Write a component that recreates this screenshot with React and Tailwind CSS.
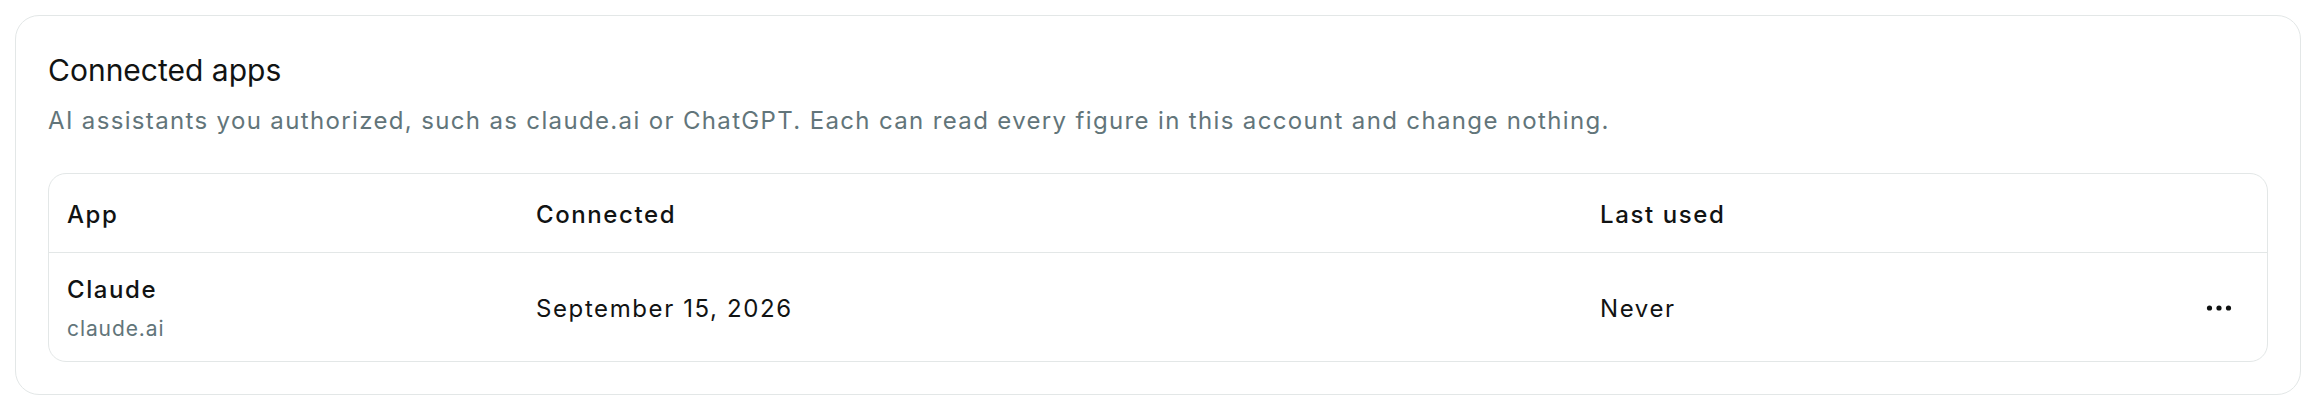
import React from "react";

function Dots() {
  return (
    <svg width="36" height="36" viewBox="0 0 36 36" fill="#0f1111" aria-hidden="true">
      <circle cx="8.5" cy="18" r="2.6" />
      <circle cx="18" cy="18" r="2.6" />
      <circle cx="27.5" cy="18" r="2.6" />
    </svg>
  );
}

export default function App() {
  return (
    <div
      className="p-[15px] bg-white"
      style={{ fontFamily: "Inter, 'Noto Sans', 'Liberation Sans', sans-serif" }}
    >
      <div className="rounded-[24px] border border-[#e3e7e7] bg-white p-[32px]">
        <h2 className="text-[30px] leading-[44px] font-normal text-[#111313]">Connected apps</h2>
        <p className="mt-[11px] text-[24px] leading-[36px] tracking-[1.35px] text-[#62757a]">
          AI assistants you authorized, such as claude.ai or ChatGPT. Each can read every figure in this account and change nothing.
        </p>
        <div className="mt-[34px] rounded-[18px] border border-[#e3e7e7] overflow-hidden">
          <div className="grid grid-cols-[469px_1064px_1fr_auto] h-[79px] items-center border-b border-[#e3e7e7] text-[24px] leading-[32px] tracking-[1.6px] font-medium text-[#111313]">
            <div className="pl-[18px] pt-[3px]">App</div>
            <div className="pl-[18px] pt-[3px]">Connected</div>
            <div className="pl-[18px] pt-[3px]">Last used</div>
            <div className="w-[66px]" />
          </div>
          <div className="grid grid-cols-[469px_1064px_1fr_auto] h-[108px] items-center text-[24px] leading-[32px] tracking-[1.6px] text-[#111313]">
            <div className="pl-[18px] pt-[4px] flex flex-col gap-[8px]">
              <span className="font-medium">Claude</span>
              <span className="text-[21px] leading-[30px] tracking-[0.9px] text-[#62757a]">claude.ai</span>
            </div>
            <div className="pl-[18px] pt-[4px]">September 15, 2026</div>
            <div className="pl-[18px] pt-[4px]">Never</div>
            <div className="pr-[30px] pt-[1px] flex items-center">
              <button type="button" className="flex items-center justify-center w-[36px] h-[36px]">
                <Dots />
              </button>
            </div>
          </div>
        </div>
      </div>
    </div>
  );
}
